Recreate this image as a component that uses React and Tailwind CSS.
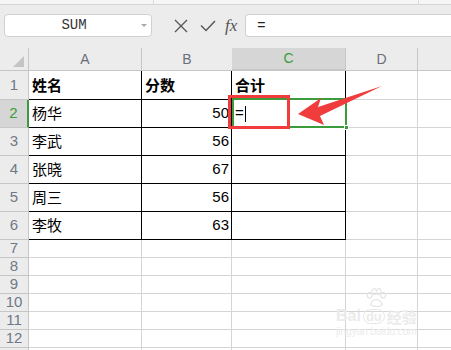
import React from 'react'

const COLS = ['w-[29px]', 'w-[113px]', 'w-[90px]', 'w-[114px]', 'w-[72px]', 'flex-1']

const DATA = [
  ['姓名', '分数', '合计'],
  ['杨华', '50', '='],
  ['李武', '56', ''],
  ['张晓', '67', ''],
  ['周三', '56', ''],
  ['李牧', '63', ''],
]

const cjk = "font-['Noto_Sans_CJK_SC',sans-serif]"
const latin = "font-['Liberation_Sans',Arial,sans-serif]"

function Toolbar() {
  return (
    <div className="bg-[#ececec]">
      <div className="h-[5px] bg-[#f6f6f6] border-b border-[#d6d6d6] relative">
        <div className="absolute left-[153px] top-0 h-[5px] w-px bg-[#dcdcdc]" />
        <div className="absolute left-[418px] top-0 h-[5px] w-px bg-[#dcdcdc]" />
      </div>
      <div className="flex items-center h-[43px] pb-[2px]">
        <div className="ml-[4px] w-[148px] h-[23px] bg-white border border-[#d0d0d0] rounded-[4px] flex items-center relative">
          <span className="flex-1 text-center pr-[8px] text-[14px] text-[#333] font-['Liberation_Mono',monospace]">SUM</span>
          <span className="absolute right-[4px] top-[9px] w-0 h-0 border-l-[3px] border-r-[3px] border-t-[3px] border-l-transparent border-r-transparent border-t-[#a8a8a8]" />
        </div>
        <svg className="ml-[22px]" width="14" height="14" viewBox="0 0 14 14">
          <path d="M1 1 L13 13 M13 1 L1 13" stroke="#555" strokeWidth="1.3" fill="none" />
        </svg>
        <svg className="ml-[12px]" width="16" height="12" viewBox="0 0 16 12">
          <path d="M1 5.5 L6 10.5 L15 1" stroke="#555" strokeWidth="1.4" fill="none" />
        </svg>
        <span className="ml-[9px] text-[17px] italic text-[#555] font-['Liberation_Serif',serif] leading-none">fx</span>
        <div className="ml-[8px] flex-1 h-[23px] bg-white border border-[#d0d0d0] border-r-0 rounded-l-[4px] flex items-center pl-[11px]">
          <span className={`text-[14px] text-[#222] ${latin}`}>=</span>
        </div>
      </div>
    </div>
  )
}

function HeaderRow() {
  const letters = ['A', 'B', 'C', 'D', '']
  return (
    <div className="flex h-[23px] bg-[#ececec] border-b border-[#c6c6c6]">
      <div className={`${COLS[0]} border-r border-[#c6c6c6] flex items-end justify-end pr-[4px] pb-[3px]`}>
        <div className="w-0 h-0 border-l-[11px] border-b-[11px] border-l-transparent border-b-[#c4c4c4]" />
      </div>
      {letters.map((l, i) => (
        <div
          key={i}
          className={`${COLS[i + 1]} flex items-center justify-center text-[14px] ${latin} ${
            l === 'C'
              ? 'bg-[#d6d6d6] border-b-2 border-[#3c9c3c] text-[#3c9c3c] -mb-px'
              : 'text-[#6a6f7a]'
          } ${i < 4 && l !== 'B' ? 'border-r border-[#c6c6c6]' : ''}`}
        >
          {l}
        </div>
      ))}
    </div>
  )
}

function DataRow({ n, row, tall }) {
  const selected = n === 2
  const h = n === 1 ? 'h-[29px]' : tall ? 'h-[28px]' : 'h-[18px]'
  return (
    <div className={`flex ${h}`}>
      <div
        className={`${COLS[0]} flex items-center justify-center text-[15px] ${latin} border-b border-[#c6c6c6] ${
          selected ? 'bg-[#d6d6d6] border-r-2 border-r-[#3c9c3c] text-[#3c9c3c]' : 'bg-[#ececec] border-r text-[#707888]'
        }`}
      >
        {n}
      </div>
      {[0, 1, 2, 3, 4].map(c => {
        const inTable = row && c < 3
        const val = row ? row[c] || '' : ''
        const numeric = c === 1 && n > 1
        return (
          <div
            key={c}
            className={`${COLS[c + 1]} flex items-center overflow-hidden ${
              inTable ? 'border-r border-b border-black' : 'border-r border-b border-[#d4d4d4]'
            } ${c === 4 ? 'border-r-0' : ''} ${numeric ? 'justify-end pr-[2px]' : 'pl-[3px]'}`}
          >
            {c === 2 && n === 2 ? (
              <span className={`text-[15px] ${latin} flex items-center`}>
                =<span className="inline-block w-px h-[16px] bg-black ml-px" />
              </span>
            ) : numeric ? (
              <span className={`text-[15px] ${latin}`}>{val}</span>
            ) : (
              <span className={`text-[15px] ${n === 1 ? 'font-bold' : ''} ${cjk}`}>{val}</span>
            )}
          </div>
        )
      })}
    </div>
  )
}

export default function App() {
  const rows = []
  for (let n = 1; n <= 13; n++) {
    rows.push(<DataRow key={n} n={n} row={DATA[n - 1]} tall={n <= 6} />)
  }
  return (
    <div className="w-[451px] h-[350px] overflow-hidden bg-white relative">
      <Toolbar />
      <HeaderRow />
      <div className="relative">
        {rows}
        {/* selected cell */}
        <div className="absolute left-[232px] top-[27px] w-[115px] h-[30px] border-2 border-[#3c9c3c] pointer-events-none" />
        <div className="absolute left-[344px] top-[54px] w-[5px] h-[5px] bg-[#3c9c3c] border border-white" />
        {/* watermark */}
        <div className="absolute left-[336px] top-[217px] flex flex-col items-center pointer-events-none">
          <svg width="24" height="20" viewBox="0 0 26 22">
            <g fill="none" stroke="#e6e6e6" strokeWidth="1.4">
              <ellipse cx="6" cy="8" rx="2.6" ry="3.2" />
              <ellipse cx="11" cy="4" rx="2.6" ry="3.2" />
              <ellipse cx="16" cy="4" rx="2.6" ry="3.2" />
              <ellipse cx="21" cy="8" rx="2.6" ry="3.2" />
              <path d="M7 18 C9 11 17 11 20 18 C18 21 9 21 7 18 Z" />
            </g>
          </svg>
          <div className={`flex items-center text-[16px] font-bold text-[#ebebeb] ${latin} leading-none`}>
            Bai<span className="mx-[2px] px-[2px] rounded-full border border-[#e6e6e6] text-[13px]">du</span>
            <span className={`${cjk} text-[15px]`}>经验</span>
          </div>
          <div className={`text-[10px] text-[#ebebeb] ${latin} leading-none mt-[3px]`}>jingyan.baidu.com</div>
        </div>
      </div>
      {/* annotation overlay */}
      <svg className="absolute left-0 top-0 pointer-events-none" width="451" height="350">
        <rect x="229.5" y="96.5" width="59" height="31" fill="none" stroke="#f03c3c" strokeWidth="3" />
        <path d="M382 86 L318 107 L321 98 L298 114 L324 125 L320 116 Z" fill="#f03c3c" />
      </svg>
    </div>
  )
}
